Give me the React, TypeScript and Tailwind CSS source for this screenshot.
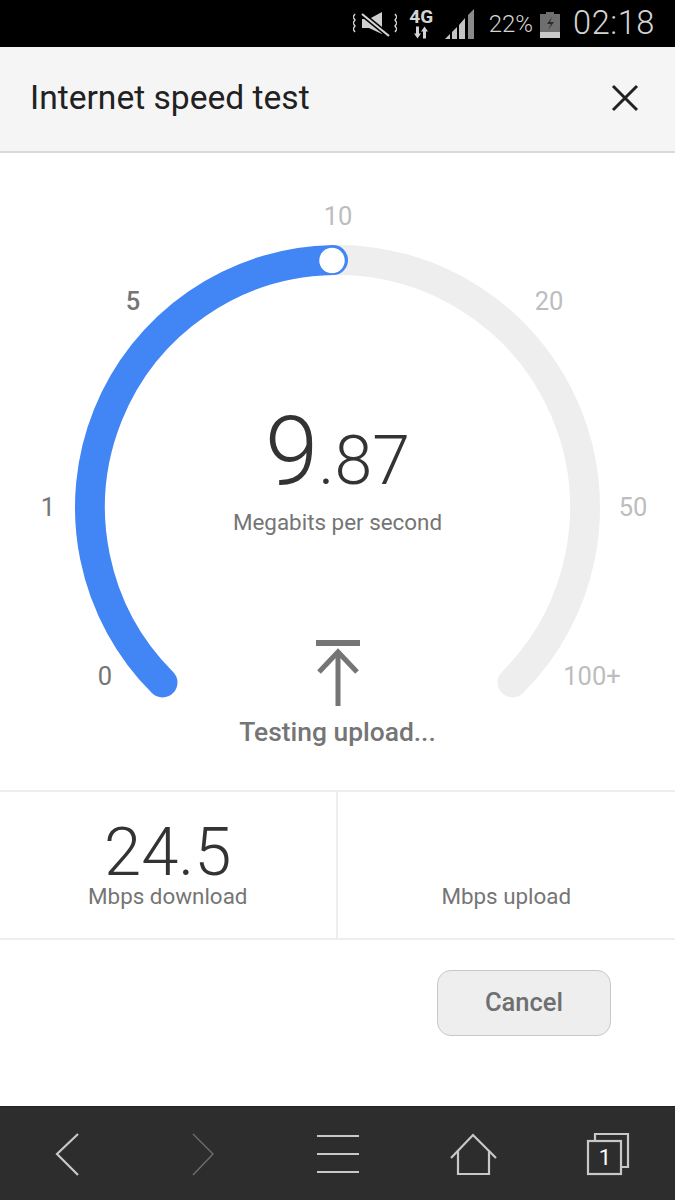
import React from 'react';

const ticks = [
  { label: '10', x: 338, y: 64, color: 'text-[#bdbdbd]' },
  { label: '5', x: 133, y: 149, color: 'text-[#757575] font-medium' },
  { label: '20', x: 549, y: 149, color: 'text-[#bdbdbd]' },
  { label: '1', x: 48, y: 355, color: 'text-[#757575]' },
  { label: '50', x: 633, y: 355, color: 'text-[#bdbdbd]' },
  { label: '0', x: 105, y: 524, color: 'text-[#757575]' },
  { label: '100+', x: 592, y: 524, color: 'text-[#bdbdbd]' },
];

const StatusBar = () => (
  <div className="h-[47px] bg-black flex items-center justify-end pr-[20px] text-[#d4d4d4]">
    <svg width="44" height="26" viewBox="0 0 44 26" className="mr-[12px]" fill="none">
      <path d="M2 3L0 6l2 3-2 3 2 3-2 3 2 3M42 3l2 3-2 3 2 3-2 3 2 3-2 3" stroke="#d4d4d4" strokeWidth="1.4" />
      <path d="M9 8h7l13-7v22l-13-6H9z" fill="#cfcfcf" />
      <path d="M9 3l27 22" stroke="#000" strokeWidth="5" />
      <path d="M9 3l27 22" stroke="#d4d4d4" strokeWidth="2.2" />
    </svg>
    <div className="flex flex-col items-center mr-[11px] w-[25px] -mt-[1px]">
      <span className="text-[19px] leading-[18px] font-bold">4G</span>
      <svg width="16" height="13" viewBox="0 0 16 12" fill="#d4d4d4">
        <path d="M3 0h3v7h2l-3.5 5L1 7h2zM10 5H8l3.5-5L15 5h-2v7h-3z" />
      </svg>
    </div>
    <svg width="29" height="30" viewBox="0 0 29 30" className="mr-[15px]" fill="#c4c4c4">
      <path d="M0 30l5-5v5z" />
      <path d="M7 23l5-5v12H7z" />
      <path d="M14 16l6-7v21h-6z" />
      <path d="M23 6l6-6v30h-6z" fill="#8a8a8a" />
    </svg>
    <span className="text-[24px] font-light mr-[7px] leading-none">22%</span>
    <svg width="20" height="26" viewBox="0 0 20 26" className="mr-[13px] mt-[3px]">
      <path d="M6 0h8v2h6v24H0V2h6z" fill="#6f6f6f" />
      <path d="M0 20h20v6H0z" fill="#c9c9c9" />
      <path d="M12 5l-5 7h4l-3 6 6-8h-4z" fill="#2b2b2b" />
    </svg>
    <span className="text-[32.5px] font-light tracking-[0.6px] leading-none">02:18</span>
  </div>
);

const Gauge = () => (
  <div className="relative h-[637px]">
    <svg width="675" height="637" viewBox="0 0 675 637" className="block">
      <path d="M512.5 529.5 A247.5 247.5 0 0 0 333 107" fill="none" stroke="#eeeeee" strokeWidth="30" strokeLinecap="round" />
      <path d="M162.5 529.5 A247.5 247.5 0 0 1 333 107" fill="none" stroke="#4285f4" strokeWidth="30" strokeLinecap="round" />
      <circle cx="332" cy="107.5" r="13.5" fill="#ffffff" stroke="#4285f4" strokeWidth="1.5" />
    </svg>
    {ticks.map((t) => (
      <span
        key={t.label}
        className={`absolute -translate-x-1/2 -translate-y-1/2 text-[25.5px] leading-none ${t.color}`}
        style={{ left: t.x, top: t.y }}
      >
        {t.label}
      </span>
    ))}
    <div className="absolute left-0 right-0 top-[250px] flex flex-col items-center">
      <div className="flex items-baseline h-[100px] text-[#333333] font-light leading-none">
        <span className="text-[96px]">9</span>
        <span className="text-[68px]">.87</span>
      </div>
      <span className="text-[22.4px] leading-[28px] text-[#757575] mt-[5px]">Megabits per second</span>
      <svg width="44" height="66" viewBox="0 0 44 66" className="mt-[104px]" fill="none" stroke="#757575">
        <path d="M0 3h44" strokeWidth="6" />
        <path d="M22 66V13" strokeWidth="5" />
        <path d="M3 32l19-20 19 20" strokeWidth="5" />
      </svg>
      <span className="text-[26.4px] leading-[32px] font-medium text-[#757575] mt-[10px]">Testing upload...</span>
    </div>
  </div>
);

const Results = () => (
  <div className="grid grid-cols-2 h-[150px] border-y-2 border-[#eeeeee]">
    <div className="flex flex-col items-center pt-[30px] border-r-2 border-[#eeeeee]">
      <span className="text-[67px] leading-[60px] font-light text-[#333333]">24.5</span>
      <span className="text-[22.4px] leading-[28px] text-[#757575]">Mbps download</span>
    </div>
    <div className="flex flex-col items-center pt-[90px]">
      <span className="text-[22.4px] leading-[28px] text-[#757575]">Mbps upload</span>
    </div>
  </div>
);

const BottomNav = () => (
  <div className="relative h-[94px] bg-[#2d2d2d] border-t border-[#222222]">
    <svg width="675" height="94" viewBox="0 0 675 94" fill="none" stroke="#c8c8c8" strokeWidth="2.2" className="block">
      <path d="M78 27L57 47l21 21" />
      <path d="M193 27l20 20-20 21" stroke="#6e6e6e" strokeWidth="1.4" />
      <path d="M317 29h42M317 47h42M317 65h42" />
      <path d="M451 51l22-23 23 23" />
      <path d="M458 43v24h31V43" />
      <path d="M595 34v-7h33v33h-7" />
      <rect x="588" y="34" width="33" height="33" />
    </svg>
    <span className="absolute left-[605px] top-[51px] -translate-x-1/2 -translate-y-1/2 text-[22px] leading-none text-white">1</span>
  </div>
);

export default function App() {
  return (
    <div className="w-[675px] h-[1200px] bg-white flex flex-col font-['Roboto',sans-serif] overflow-hidden">
      <StatusBar />
      <div className="h-[106px] bg-[#f5f5f5] border-b-2 border-[#d9d9d9] flex items-center justify-between pl-[30px] pr-[36px] pb-[2px]">
        <span className="text-[33.6px] text-[#212121] leading-none">Internet speed test</span>
        <svg width="28" height="28" viewBox="0 0 28 28" fill="none" stroke="#212121" strokeWidth="3">
          <path d="M2 2l24 24M26 2L2 26" />
        </svg>
      </div>
      <Gauge />
      <Results />
      <div className="flex-1 flex justify-end items-start pt-[30px] pr-[64px]">
        <button className="w-[174px] h-[66px] rounded-[14px] bg-[#eeeeee] border border-[#c8c8c8] text-[25.5px] font-medium text-[#6f6f6f] pb-[2px]">
          Cancel
        </button>
      </div>
      <BottomNav />
    </div>
  );
}
